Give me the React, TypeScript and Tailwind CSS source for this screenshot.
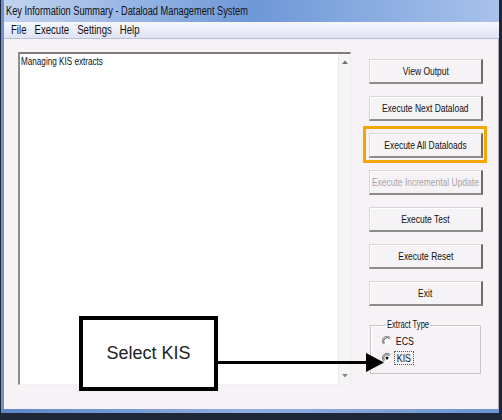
import React from "react";

const Radio = ({ checked }: { checked?: boolean }) => (
  <svg width="12" height="12" viewBox="0 0 12 12" className="shrink-0">
    <circle cx="6" cy="6" r="4.5" fill="#ffffff" />
    <path d="M9.2 2.8 A4.5 4.5 0 0 0 2.8 9.2" fill="none" stroke="#8a8a8a" strokeWidth="1.2" />
    <path d="M8.4 3.6 A3.4 3.4 0 0 0 3.6 8.4" fill="none" stroke="#505050" strokeWidth="0.9" />
    <path d="M2.8 9.2 A4.5 4.5 0 0 0 9.2 2.8" fill="none" stroke="#f4f4f4" strokeWidth="1" />
    {checked && <circle cx="6" cy="6" r="1.5" fill="#111" />}
  </svg>
);

const Btn = ({ label, disabled }: { label: string; disabled?: boolean }) => (
  <div className="h-[25px] w-[114px] flex items-center justify-center bg-[#f6f3f6] border-t border-l border-t-[#d9d6d9] border-l-[#d9d6d9] border-r-[2px] border-b-[2px] border-r-[#6b6b6b] border-b-[#8c8c8c] shadow-[inset_1px_1px_0_#ffffff]">
    <span
      className={
        "inline-block scale-x-[0.77] text-[11px] leading-none whitespace-nowrap " +
        (disabled ? "text-[#a9a6a9]" : "text-[#111]")
      }
    >
      {label}
    </span>
  </div>
);

export default function App() {
  return (
    <div className="relative w-[502px] h-[420px] overflow-hidden bg-[#1f2638] font-['Liberation_Sans',Arial,sans-serif]">
      <div className="ml-[1px] w-[498px] h-[409px] flex flex-col border-l-[3px] border-[#6d92d1] bg-[#f6f2f6]">
        {/* Title bar */}
        <div className="h-[22px] shrink-0 flex items-center pl-[2px] bg-gradient-to-r from-[#c3d4ef] via-[#6e97d8] to-[#a8c2ea]">
          <span className="inline-block origin-left scale-x-[0.77] text-[12px] text-[#111] whitespace-nowrap">
            Key Information Summary - Dataload Management System
          </span>
        </div>
        {/* Menu bar */}
        <div className="h-[17px] shrink-0 flex items-center pl-[7px] bg-gradient-to-b from-[#f7f7fc] to-[#dfe3f6] border-b border-[#b9bfd8]">
          <div className="flex items-center gap-[10px] origin-left scale-x-[0.8] whitespace-nowrap">
            <span className="text-[12px] text-[#111]">File</span>
            <span className="text-[12px] text-[#111]">Execute</span>
            <span className="text-[12px] text-[#111]">Settings</span>
            <span className="text-[12px] text-[#111]">Help</span>
          </div>
        </div>
        {/* Content */}
        <div className="flex-1 flex pl-[14px] pt-[13px] border-r border-[#a8a8b0]">
          {/* Text area */}
          <div className="w-[333px] h-[333px] flex bg-[#ffffff] border-t-[2px] border-l-[2px] border-t-[#7d7d7d] border-l-[#8f8f8f] border-r border-b border-r-[#ececec] border-b-[#f2eef2]">
            <div className="flex-1 pl-[1px] pt-[1px]">
              <div className="block w-max origin-left scale-x-[0.74] whitespace-nowrap text-[11px] leading-[13px] text-[#111]">
                Managing KIS extracts
              </div>
            </div>
            <div className="w-[12px] flex flex-col items-center justify-between py-[6px] bg-[#f7f4f7] border-l border-[#ece8ec]">
              <svg width="6" height="4" viewBox="0 0 6 4">
                <path d="M0 4 L3 0.5 L6 4 Z" fill="#707070" />
              </svg>
              <svg width="6" height="4" viewBox="0 0 6 4">
                <path d="M0 0 L3 3.5 L6 0 Z" fill="#8a8a8a" />
              </svg>
            </div>
          </div>
          {/* Buttons */}
          <div className="ml-[18px] pt-[7px] flex flex-col gap-[12px]">
            <Btn label="View Output" />
            <Btn label="Execute Next Dataload" />
            <div className="relative">
              <Btn label="Execute All Dataloads" />
              <div className="absolute -left-[6px] -top-[7px] w-[124px] h-[37px] border-[3px] border-[#f5a700]" />
            </div>
            <Btn label="Execute Incremental Update" disabled />
            <Btn label="Execute Test" />
            <Btn label="Execute Reset" />
            <Btn label="Exit" />
            <fieldset className="ml-[1px] w-[111px] h-[56px] border border-[#c9c5c9] shadow-[inset_1px_1px_0_#ffffff] pl-[10px]">
              <legend className="ml-[5px] px-[1px] text-[10px] leading-[14px] text-[#111]">
                <span className="inline-block origin-left scale-x-[0.76] whitespace-nowrap -mr-[13px]">Extract Type</span>
              </legend>
              <div className="flex flex-col gap-[3px] pt-[2px]">
                <div className="flex items-center gap-[2px] h-[14px]">
                  <Radio />
                  <span className="inline-block origin-left scale-x-[0.8] text-[11px] leading-none text-[#111] px-[1px]">ECS</span>
                </div>
                <div className="flex items-center gap-[1px] h-[14px]">
                  <Radio checked />
                  <span className="flex items-center h-[14px] px-[1px] border border-dotted border-[#555]">
                    <span className="inline-block scale-x-[0.8] text-[11px] leading-none text-[#111] -mx-[1px]">KIS</span>
                  </span>
                </div>
              </div>
            </fieldset>
          </div>
        </div>
      </div>
      {/* bottom frame */}
      <div className="ml-[1px] w-[498px] h-[4px] bg-gradient-to-r from-[#5f86c8] via-[#8fb0e2] to-[#6f94d0]" />

      {/* Annotation arrow */}
      <svg className="absolute left-0 top-0 pointer-events-none" width="502" height="420" viewBox="0 0 502 420">
        <rect x="216" y="361" width="152" height="3" fill="#000" />
        <polygon points="366,353 384,362.5 366,372" fill="#000" />
      </svg>
      {/* Callout box */}
      <div className="absolute left-[79px] top-[316px] w-[139px] h-[75px] border-[4px] border-black bg-white flex items-center justify-center">
        <span className="text-[18px] text-[#222]">Select KIS</span>
      </div>
    </div>
  );
}
